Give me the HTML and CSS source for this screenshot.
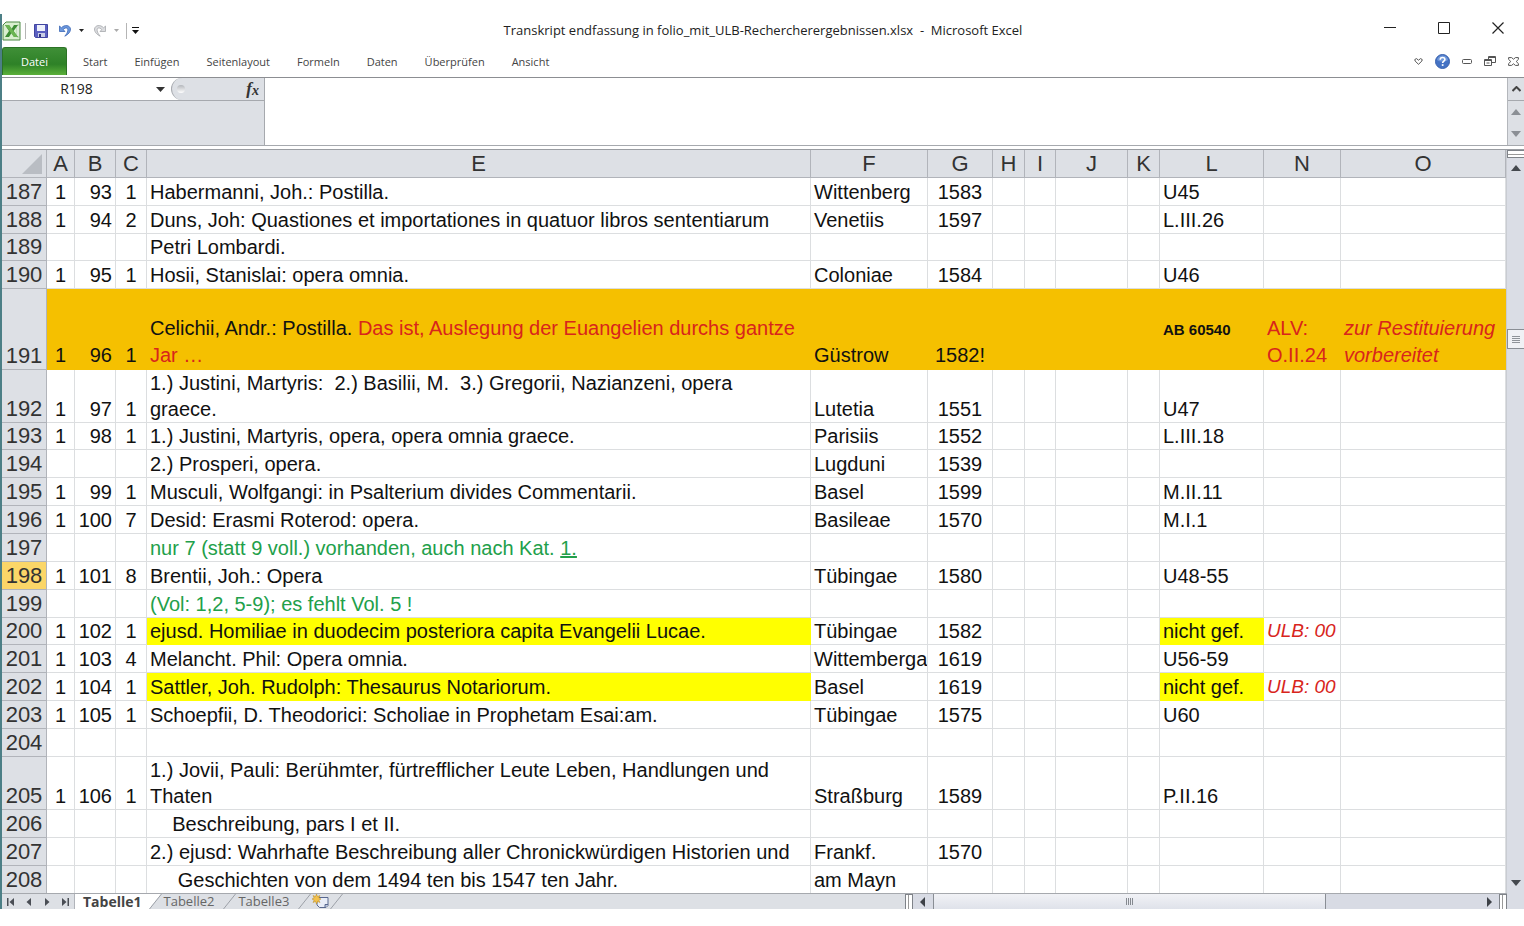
FILE: index.html
```html
<!DOCTYPE html>
<html lang="de">
<head>
  <meta charset="UTF-8">
  <title>Transkript endfassung in folio_mit_ULB-Rechercherergebnissen.xlsx - Microsoft Excel</title>
  <link rel="stylesheet" href="styles.css">
</head>
<body>
<div class="app">
  <header class="titlebar">
    <div class="quick">
      <svg class="logo" width="19" height="20" viewBox="0 0 19 20"><path d="M4 1h14v18H1V4z" fill="#d9efcf" stroke="#4d8a45"/><path d="M15 4h2v12h-2z" fill="#fff" stroke="#8ebc83" stroke-width=".6"/><path d="M3 4h4l2.500 4L12 4h4l-4.500 6 4.500 6h-4l-2.500-4L7 16H3l4-6z" fill="#3c8c34"/><path d="M3 4h4l9 12h-4z" fill="#6bb552"/></svg>
      <span class="sep"></span>
      <button class="icon save" aria-label="Speichern"><svg width="14" height="14" viewBox="0 0 14 14"><path d="M.5.5h13v13h-12l-1-1z" fill="#5a5fc0" stroke="#4145a0"/><path d="M3 1h8v6H3z" fill="#eef1fb"/><path d="M4 9h7v4H4z" fill="#c9cee6"/><path d="M5 10h2v3H5z" fill="#30337d"/></svg></button>
      <button class="icon undo" aria-label="Rückgängig"><svg width="14" height="14" viewBox="0 0 14 14"><path d="M1.500 2v5.500h5.500L5.200 5.600C7.500 3 10.300 3.500 9.800 6.800c-.3 1.800-1.400 3.400-3 5.400C10.200 10.500 12.600 8 12.500 5 12 1 6.500.3 3.400 3.800z" fill="#6c98dd" stroke="#3c67b5" stroke-width=".8"/></svg></button>
      <button class="icon drop" aria-label="Rückgängig-Liste"><svg width="5" height="3" viewBox="0 0 5 3"><path d="M0 0h5L2.500 3z" fill="#222"/></svg></button>
      <button class="icon redo" aria-label="Wiederholen"><svg width="14" height="14" viewBox="0 0 14 14"><path d="M12.500 2v5.500H7l1.800-1.900C6.500 3 3.700 3.500 4.200 6.800c.3 1.800 1.400 3.400 3 5.400C3.800 10.500 1.400 8 1.500 5 2 1 7.500.3 10.600 3.800z" fill="#dcdde0" stroke="#a6a8ac" stroke-width=".8"/></svg></button>
      <button class="icon drop" aria-label="Wiederholen-Liste"><svg width="5" height="3" viewBox="0 0 5 3"><path d="M0 0h5L2.500 3z" fill="#aaa"/></svg></button>
      <span class="sep"></span>
      <button class="icon more" aria-label="Symbolleiste anpassen"><svg width="7" height="7" viewBox="0 0 7 7"><path d="M0 0h7v1H0zM0 3h7L3.500 7z" fill="#111"/></svg></button>
    </div>
    <h1>Transkript endfassung in folio_mit_ULB-Rechercherergebnissen.xlsx&nbsp; -&nbsp; Microsoft Excel</h1>
    <div class="winbtns">
      <button class="icon" aria-label="Minimieren"><svg width="12" height="12" viewBox="0 0 12 12"><path d="M0 5.500h12" stroke="#222"/></svg></button>
      <button class="icon" aria-label="Maximieren"><svg width="12" height="12" viewBox="0 0 12 12"><path d="M.5.5h11v11H.5z" fill="none" stroke="#222"/></svg></button>
      <button class="icon" aria-label="Schließen"><svg width="12" height="12" viewBox="0 0 12 12"><path d="M.5.5l11 11M11.500.5l-11 11" stroke="#222" stroke-width="1.200"/></svg></button>
    </div>
  </header>

  <nav class="ribbon">
    <button class="datei">Datei</button>
    <div class="tabs">
      <button>Start</button>
      <button>Einfügen</button>
      <button>Seitenlayout</button>
      <button>Formeln</button>
      <button>Daten</button>
      <button>Überprüfen</button>
      <button>Ansicht</button>
    </div>
    <div class="ribbon-right">
      <button class="icon" aria-label="Menüband"><svg width="9" height="7" viewBox="0 0 9 7"><path d="M.8 1.500L2.500.6l2 1.600L6.500.6l1.700.9-.3 1.500-3.400 3.300L1.100 3z" fill="#fff" stroke="#555"/></svg></button>
      <button class="icon" aria-label="Hilfe"><svg width="15" height="15" viewBox="0 0 15 15"><circle cx="7.500" cy="7.500" r="7" fill="#4472c4" stroke="#3a62ae"/><path d="M2 6a5.600 5.600 0 0 1 11 0c-3 2-8 2-11 0z" fill="#6f97d9"/><path d="M5.200 5.700C5.200 2.800 9.900 2.800 9.900 5.500c0 1.700-2.300 1.700-2.300 3.600" fill="none" stroke="#fff" stroke-width="1.600"/><path d="M6.800 10.200h1.700v1.700H6.800z" fill="#fff"/></svg></button>
      <button class="icon" aria-label="Mappe minimieren"><svg width="10" height="5" viewBox="0 0 10 5"><rect x=".5" y=".5" width="9" height="4" rx="1" fill="#fff" stroke="#555"/></svg></button>
      <button class="icon" aria-label="Mappe wiederherstellen"><svg width="12" height="10" viewBox="0 0 12 10"><path d="M4.500.5h7v6h-7z" fill="#fff" stroke="#555"/><path d="M4.500 1.500h7" stroke="#555"/><path d="M.5 3.500h7v6h-7z" fill="#fff" stroke="#555"/><path d="M.5 4.500h7M2.500 7h3" stroke="#555"/></svg></button>
      <button class="icon" aria-label="Mappe schließen"><svg width="11" height="9" viewBox="0 0 11 9"><path d="M.6.6h3l1.900 1.600L7.400.6h3v1.800L8.200 4.500l2.200 2.100v1.800h-3L5.500 6.800 3.600 8.400h-3V6.600l2.200-2.100L.6 2.400z" fill="#fff" stroke="#555"/></svg></button>
    </div>
  </nav>

  <section class="formula">
    <div class="namepanel">
      <div class="namerow">
        <input class="namebox" type="text" value="R198" aria-label="Namenfeld">
        <button class="icon namedrop" aria-label="Namen anzeigen"><svg width="9" height="5" viewBox="0 0 9 5"><path d="M0 0h9L4.500 5z" fill="#333"/></svg></button>
        <div class="fxbar">
          <span class="knob"></span>
          <button class="icon fx" aria-label="Funktion einfügen"><i>f</i><i class="x">x</i></button>
        </div>
      </div>
    </div>
    <textarea class="formulabox" aria-label="Bearbeitungsleiste"></textarea>
    <div class="formulaside">
      <button class="icon expand" aria-label="Erweitern"><svg width="9" height="6" viewBox="0 0 9 6"><path d="M.5 5L4.500 1l4 4" fill="none" stroke="#444" stroke-width="2"/></svg></button>
      <button class="icon" aria-label="Nach oben"><svg width="10" height="6" viewBox="0 0 10 6"><path d="M0 6h10L5 0z" fill="#8b8f95"/></svg></button>
      <button class="icon" aria-label="Nach unten"><svg width="10" height="6" viewBox="0 0 10 6"><path d="M0 0h10L5 6z" fill="#8b8f95"/></svg></button>
    </div>
  </section>

  <main class="sheet">
    <table>
      <colgroup>
        <col class="w-head"><col class="w-a"><col class="w-b"><col class="w-c"><col class="w-e"><col class="w-f"><col class="w-g"><col class="w-h"><col class="w-i"><col class="w-j"><col class="w-h"><col class="w-l"><col class="w-n"><col class="w-o">
      </colgroup>
      <thead>
        <tr><th class="corner"><svg width="20" height="20" viewBox="0 0 20 20"><path d="M20 0v20H0z" fill="#b9bdc3"/></svg></th><th>A</th><th>B</th><th>C</th><th>E</th><th>F</th><th>G</th><th>H</th><th>I</th><th>J</th><th>K</th><th>L</th><th>N</th><th>O</th></tr>
      </thead>
      <tbody>
        <tr><th>187</th><td>1</td><td>93</td><td>1</td><td>Habermanni, Joh.: Postilla.</td><td>Wittenberg</td><td>1583</td><td></td><td></td><td></td><td></td><td>U45</td><td></td><td></td></tr>
        <tr><th>188</th><td>1</td><td>94</td><td>2</td><td>Duns, Joh: Quastiones et importationes in quatuor libros sententiarum</td><td>Venetiis</td><td>1597</td><td></td><td></td><td></td><td></td><td>L.III.26</td><td></td><td></td></tr>
        <tr class="low"><th>189</th><td></td><td></td><td></td><td>Petri Lombardi.</td><td></td><td></td><td></td><td></td><td></td><td></td><td></td><td></td><td></td></tr>
        <tr><th>190</th><td>1</td><td>95</td><td>1</td><td>Hosii, Stanislai: opera omnia.</td><td>Coloniae</td><td>1584</td><td></td><td></td><td></td><td></td><td>U46</td><td></td><td></td></tr>
        <tr class="tall orange"><th>191</th><td>1</td><td>96</td><td>1</td><td>Celichii, Andr.: Postilla. <span class="red">Das ist, Auslegung der Euangelien durchs gantze<br>Jar …</span></td><td>Güstrow</td><td>1582!</td><td></td><td></td><td></td><td></td><td class="sig">AB 60540</td><td class="red">ALV:<br>O.II.24</td><td class="red note">zur Restituierung<br>vorbereitet</td></tr>
        <tr class="double"><th>192</th><td>1</td><td>97</td><td>1</td><td>1.) Justini, Martyris:  2.) Basilii, M.  3.) Gregorii, Nazianzeni, opera<br>graece.</td><td>Lutetia</td><td>1551</td><td></td><td></td><td></td><td></td><td>U47</td><td></td><td></td></tr>
        <tr class="low"><th>193</th><td>1</td><td>98</td><td>1</td><td>1.) Justini, Martyris, opera, opera omnia graece.</td><td>Parisiis</td><td>1552</td><td></td><td></td><td></td><td></td><td>L.III.18</td><td></td><td></td></tr>
        <tr><th>194</th><td></td><td></td><td></td><td>2.) Prosperi, opera.</td><td>Lugduni</td><td>1539</td><td></td><td></td><td></td><td></td><td></td><td></td><td></td></tr>
        <tr><th>195</th><td>1</td><td>99</td><td>1</td><td>Musculi, Wolfgangi: in Psalterium divides Commentarii.</td><td>Basel</td><td>1599</td><td></td><td></td><td></td><td></td><td>M.II.11</td><td></td><td></td></tr>
        <tr><th>196</th><td>1</td><td>100</td><td>7</td><td>Desid: Erasmi Roterod: opera.</td><td>Basileae</td><td>1570</td><td></td><td></td><td></td><td></td><td>M.I.1</td><td></td><td></td></tr>
        <tr><th>197</th><td></td><td></td><td></td><td class="green">nur 7 (statt 9 voll.) vorhanden, auch nach Kat. <u>1.</u></td><td></td><td></td><td></td><td></td><td></td><td></td><td></td><td></td><td></td></tr>
        <tr><th class="current">198</th><td>1</td><td>101</td><td>8</td><td>Brentii, Joh.: Opera</td><td>Tübingae</td><td>1580</td><td></td><td></td><td></td><td></td><td>U48-55</td><td></td><td></td></tr>
        <tr><th>199</th><td></td><td></td><td></td><td class="green">(Vol: 1,2, 5-9); es fehlt Vol. 5 !</td><td></td><td></td><td></td><td></td><td></td><td></td><td></td><td></td><td></td></tr>
        <tr class="low"><th>200</th><td>1</td><td>102</td><td>1</td><td class="yellow">ejusd. Homiliae in duodecim posteriora capita Evangelii Lucae.</td><td>Tübingae</td><td>1582</td><td></td><td></td><td></td><td></td><td class="yellow">nicht gef.</td><td class="red note ulb">ULB: 00</td><td></td></tr>
        <tr><th>201</th><td>1</td><td>103</td><td>4</td><td>Melancht. Phil: Opera omnia.</td><td>Wittemberga</td><td>1619</td><td></td><td></td><td></td><td></td><td>U56-59</td><td></td><td></td></tr>
        <tr><th>202</th><td>1</td><td>104</td><td>1</td><td class="yellow">Sattler, Joh. Rudolph: Thesaurus Notariorum.</td><td>Basel</td><td>1619</td><td></td><td></td><td></td><td></td><td class="yellow">nicht gef.</td><td class="red note ulb">ULB: 00</td><td></td></tr>
        <tr><th>203</th><td>1</td><td>105</td><td>1</td><td>Schoepfii, D. Theodorici: Scholiae in Prophetam Esai:am.</td><td>Tübingae</td><td>1575</td><td></td><td></td><td></td><td></td><td>U60</td><td></td><td></td></tr>
        <tr><th>204</th><td></td><td></td><td></td><td></td><td></td><td></td><td></td><td></td><td></td><td></td><td></td><td></td><td></td></tr>
        <tr class="double"><th>205</th><td>1</td><td>106</td><td>1</td><td>1.) Jovii, Pauli: Berühmter, fürtrefflicher Leute Leben, Handlungen und<br>Thaten</td><td>Straßburg</td><td>1589</td><td></td><td></td><td></td><td></td><td>P.II.16</td><td></td><td></td></tr>
        <tr><th>206</th><td></td><td></td><td></td><td>    Beschreibung, pars I et II.</td><td></td><td></td><td></td><td></td><td></td><td></td><td></td><td></td><td></td></tr>
        <tr><th>207</th><td></td><td></td><td></td><td>2.) ejusd: Wahrhafte Beschreibung aller Chronickwürdigen Historien und</td><td>Frankf.</td><td>1570</td><td></td><td></td><td></td><td></td><td></td><td></td><td></td></tr>
        <tr class="low last"><th>208</th><td></td><td></td><td></td><td>     Geschichten von dem 1494 ten bis 1547 ten Jahr.</td><td>am Mayn</td><td></td><td></td><td></td><td></td><td></td><td></td><td></td><td></td></tr>
      </tbody>
    </table>
    <div class="vscroll">
      <span class="split"></span>
      <button class="icon" aria-label="Zeile nach oben"><svg width="10" height="6" viewBox="0 0 10 6"><path d="M0 6h10L5 0z" fill="#44484e"/></svg></button>
      <div class="vtrack"><span class="vthumb"></span></div>
      <button class="icon" aria-label="Zeile nach unten"><svg width="10" height="6" viewBox="0 0 10 6"><path d="M0 0h10L5 6z" fill="#44484e"/></svg></button>
    </div>
  </main>

  <footer class="bottom">
    <div class="sheets">
      <div class="sheetnav">
        <button class="icon" aria-label="Erstes Blatt"><svg width="8" height="8" viewBox="0 0 8 8"><path d="M0 0h1.500v8H0zM7 0v8L2.500 4z" fill="#4a4e55"/></svg></button>
        <button class="icon" aria-label="Vorheriges Blatt"><svg width="8" height="8" viewBox="0 0 8 8"><path d="M6 0v8L1.500 4z" fill="#4a4e55"/></svg></button>
        <button class="icon" aria-label="Nächstes Blatt"><svg width="8" height="8" viewBox="0 0 8 8"><path d="M2 0v8l4.500-4z" fill="#4a4e55"/></svg></button>
        <button class="icon" aria-label="Letztes Blatt"><svg width="8" height="8" viewBox="0 0 8 8"><path d="M6.500 0H8v8H6.500zM1 0v8l4.500-4z" fill="#4a4e55"/></svg></button>
      </div>
      <button class="sheettab active">Tabelle1</button>
      <svg class="slant" width="15" height="15" viewBox="0 0 15 15"><path d="M0 0h13L1 15H0z" fill="#fff"/><path d="M13.500 0L1.500 15" stroke="#9da1a8"/></svg>
      <button class="sheettab">Tabelle2</button>
      <svg class="slant" width="15" height="15" viewBox="0 0 15 15"><path d="M13.500 0L1.500 15" stroke="#9da1a8"/></svg>
      <button class="sheettab">Tabelle3</button>
      <svg class="slant" width="15" height="15" viewBox="0 0 15 15"><path d="M13.500 0L1.500 15" stroke="#9da1a8"/></svg>
      <button class="icon newsheet" aria-label="Tabellenblatt einfügen"><svg width="17" height="15" viewBox="0 0 17 15"><path d="M5 3.500h11v8l-2 2H7.500L5 11z" fill="#e8edf8" stroke="#59688f"/><path d="M16 10.500h-3v3" fill="#b9c4de" stroke="#59688f"/><path d="M4.500 0l1 2.600L8 1.500 6.800 4 9 5 6.800 6 8 8.500 5.500 7.400l-1 2.600-1-2.600L1 8.500 2.200 6 0 5l2.200-1L1 1.500l2.500 1.100z" fill="#f3c14b" stroke="#b98820" stroke-width=".5"/></svg></button>
      <svg class="slant" width="15" height="15" viewBox="0 0 15 15"><path d="M13.500 0L1.500 15" stroke="#9da1a8"/></svg>
    </div>
    <div class="hscroll">
      <span class="grab"></span>
      <button class="icon arrow" aria-label="Nach links"><svg width="6" height="10" viewBox="0 0 6 10"><path d="M5 0v10L0 5z" fill="#3d4147"/></svg></button>
      <div class="htrack"><span class="hthumb"><svg width="7" height="7" viewBox="0 0 7 7"><path d="M.5 0v7M2.500 0v7M4.500 0v7M6.500 0v7" stroke="#85898f"/></svg></span></div>
      <button class="icon arrow" aria-label="Nach rechts"><svg width="6" height="10" viewBox="0 0 6 10"><path d="M1 0v10l5-5z" fill="#3d4147"/></svg></button>
      <span class="grab"></span>
    </div>
    <div class="resize"></div>
  </footer>
</div>
</body>
</html>
```
FILE: styles.css
```css
* { box-sizing: border-box; }
body { margin: 0; padding-top: 14px; background: #fff; color: #111; font-family: "Open Sans", "Noto Sans", sans-serif; }
button { font-family: inherit; border: 0; background: none; padding: 0; }
svg { display: block; }
.app { border-left: 2px solid #4c7f86; }
.icon { display: flex; align-items: center; justify-content: center; flex: none; }

/* title bar */
.titlebar { display: grid; grid-template-columns: 1fr auto 1fr; align-items: center; height: 33px; }
.quick { display: flex; align-items: center; }
.sep { width: 1px; height: 16px; background: #b5b5b5; margin-left: 4px; }
.save { margin-left: 8px; }
.undo { margin-left: 10px; }
.drop { margin-left: 7px; }
.redo { margin-left: 9px; }
.quick .drop + .sep { margin-left: 7px; }
.more { margin-left: 5px; }
h1 { margin: 0; padding-bottom: 2px; font-size: 13px; font-weight: 400; line-height: 18px; color: #222; white-space: nowrap; }
.winbtns { display: flex; justify-content: flex-end; gap: 42px; padding: 0 20px 6px 0; }

/* ribbon */
.ribbon { display: flex; height: 31px; padding-bottom: 2px; border-bottom: 1px solid #8c8e92; }
.ribbon button { font-size: 11px; }
.ribbon .datei { width: 65px; border: 1px solid #2c7326; border-bottom: 0; border-radius: 3px 3px 0 0; background: linear-gradient(#3f8f37, #2e8127 60%, #5bb03a); color: #fff; }
.tabs { display: flex; gap: 27px; margin-left: 16px; }
.tabs button { color: #444; }
.ribbon-right { display: flex; align-items: center; gap: 12px; margin-left: auto; padding-right: 5px; }

/* formula bar */
.formula { display: grid; grid-template-columns: 263px 1fr 17px; height: 68px; background: #dde0e5; border-bottom: 1px solid #a6a9ae; }
.namepanel { border-right: 1px solid #a6a9ae; }
.namerow { display: flex; height: 23px; background: #fff; border-bottom: 1px solid #a6a9ae; }
.namebox { width: 149px; border: 0; padding: 0 0 2px; background: none; text-align: center; font: 14px "Open Sans", sans-serif; color: #222; }
.namedrop { width: 18px; }
.fxbar { flex: 1; display: flex; align-items: center; justify-content: space-between; margin-left: 2px; padding: 0 5px; background: #dde0e5; border-left: 1px solid #a6a9ae; border-radius: 12px 0 0 12px; }
.knob { width: 8px; height: 8px; border-radius: 4px; background: linear-gradient(#b4b7bc, #fff); }
.fx { font: bold 17px "Liberation Serif", serif; color: #333; }
.fx .x { font-size: 14px; padding-top: 3px; }
.formulabox { width: 100%; height: 100%; border: 0; padding: 4px; resize: none; background: #fff; }
.formulaside { display: grid; grid-template-rows: 23px 1fr 1fr; border-left: 1px solid #b4b7bc; }
.formulaside .icon { width: 100%; }
.formulaside .expand { border-bottom: 1px solid #a6a9ae; }

/* grid */
.sheet { display: flex; margin-top: 3px; border-top: 1px solid #9a9da2; }
table { flex: 1; width: 0; table-layout: fixed; border-spacing: 0; font-family: "Liberation Sans", Arial, sans-serif; font-size: 20px; }
.w-head { width: 45px; }
.w-a { width: 28px; }
.w-b { width: 41px; }
.w-c { width: 31px; }
.w-f { width: 117px; }
.w-g { width: 65px; }
.w-h { width: 32px; }
.w-i { width: 31px; }
.w-j { width: 72px; }
.w-l { width: 104px; }
.w-n { width: 77px; }
.w-o { width: 165px; }
tr { height: 28px; }
tr.low { height: 27px; }
tr.double { height: 53px; }
tr.tall { height: 81px; }
td { padding: 0 0 0 3px; border-right: 1px solid #dcdee0; border-bottom: 1px solid #dcdee0; vertical-align: bottom; white-space: pre; overflow: hidden; line-height: 26px; }
th { padding: 0; font-size: 22px; font-weight: 400; line-height: 26px; color: #333; background: #dde0e5; border-right: 1px solid #b1b4ba; border-bottom: 1px solid #b1b4ba; vertical-align: bottom; }
.corner { padding: 0 4px 3px 0; }
.corner svg { margin-left: auto; }
td:nth-child(2), td:nth-child(4), td:nth-child(7) { text-align: center; padding: 0; }
td:nth-child(3) { text-align: right; padding: 0 3px 0 0; }
.current { background: #fbd668; }
.orange td { background: #f5c000; border-color: #f5c000; line-height: 27px; }
.yellow { background: #ff0; border-color: #ff0; }
.red { color: #d8251c; }
.green { color: #22a04a; }
.note { font-style: italic; }
.ulb { font-size: 19px; }
td.sig { font-size: 15px; font-weight: 700; vertical-align: middle; }
.last td, .last th { border-bottom: 0; }

.vscroll { display: flex; flex-direction: column; width: 18px; background: #dadde5; border-left: 1px solid #c9ccd2; }
.vscroll .icon { height: 20px; }
.split { height: 8px; border: 1px solid #7f8389; border-right: 0; background: linear-gradient(#fff 3px, #999 3px, #999 4px, #fff 4px); }
.vtrack { flex: 1; padding-top: 151px; }
.vthumb { display: block; height: 20px; border: 1px solid #8a8e95; border-right: 0; background: repeating-linear-gradient(#8f9399 0 1px, transparent 1px 2px) 4px 6px / 8px 7px no-repeat, #f0f1f5; }

/* sheet tabs and horizontal scroll bar */
.bottom { display: grid; grid-template-columns: 903fr 602fr 17px; height: 16px; background: #dde0e5; }
.sheets { display: flex; border-top: 1px solid #a6a9ae; }
.sheetnav { display: flex; align-items: center; gap: 10px; width: 73px; padding-left: 5px; border-right: 1px solid #b1b4ba; }
.sheettab { padding: 0 8px 0 1px; font-size: 13px; line-height: 15px; color: #666; }
.sheettab.active { padding: 0 6px 0 8px; background: #fff; color: #444; font-size: 14px; font-weight: 700; }
.slant { flex: none; }
.hscroll { display: flex; background: #d8dbe4; border-top: 1px solid #a6a9ae; }
.grab { width: 8px; border: 1px solid #7f8389; border-bottom: 0; background: linear-gradient(90deg, #fff 2px, #999 2px, #999 3px, #fff 3px); }
.arrow { width: 20px; }
.htrack { flex: 1; }
.hthumb { display: flex; align-items: center; justify-content: center; width: 72%; height: 100%; border: 1px solid #8a8e95; border-top: 0; border-bottom: 0; background: linear-gradient(#f1f2f6, #dfe2ea); }
.resize { background: #dadde5; }
```
